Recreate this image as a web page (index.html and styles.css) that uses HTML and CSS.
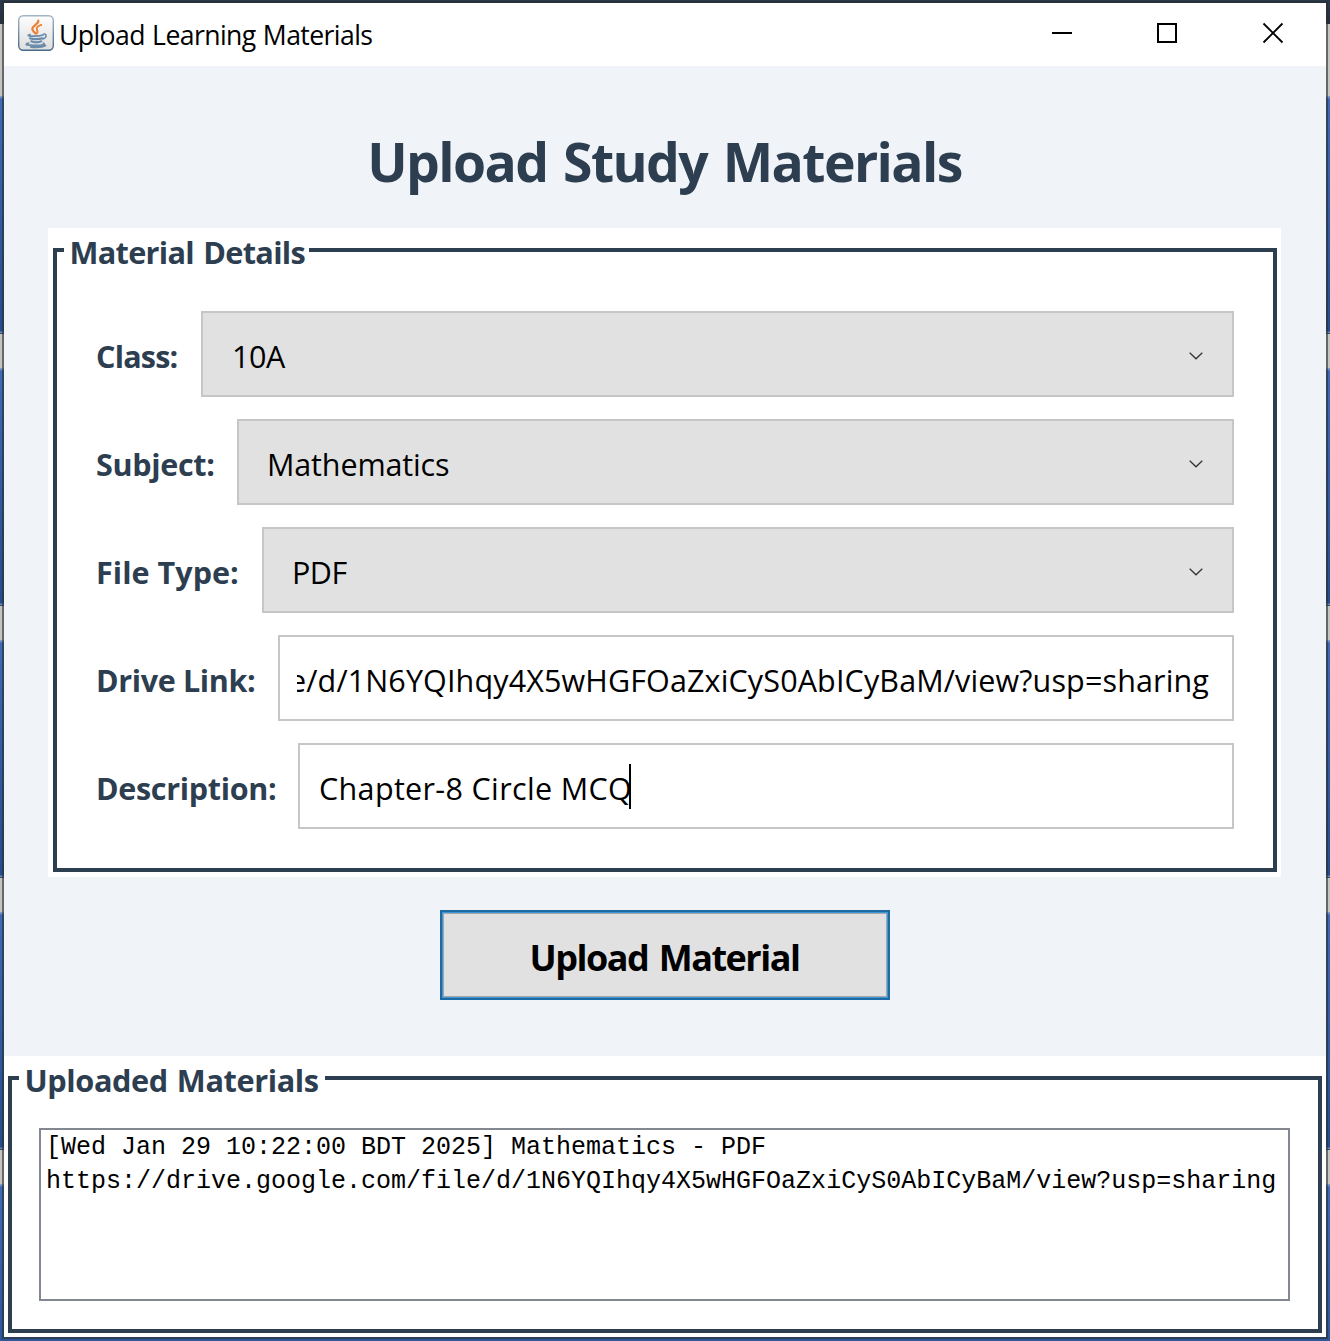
FILE: index.html
```html
<!DOCTYPE html>
<html lang="en">
<head>
<meta charset="utf-8">
<title>Upload Learning Materials</title>
<link rel="stylesheet" href="styles.css">
</head>
<body>
<div class="window">
  <header class="titlebar">
    <svg class="app-icon" width="36" height="36" viewBox="0 0 36 36">
      <defs>
        <linearGradient id="face" x1="0" y1="0" x2="0" y2="1"><stop offset="0" stop-color="#fdfdfd"/><stop offset="1" stop-color="#dedede"/></linearGradient>
        <linearGradient id="edge" x1="0" y1="0" x2="0" y2="1"><stop offset="0" stop-color="#a3b6c8"/><stop offset="1" stop-color="#456a8a"/></linearGradient>
      </defs>
      <rect x=".7" y=".7" width="34.6" height="34.6" rx="4.5" fill="url(#face)" stroke="url(#edge)" stroke-width="1.4"/>
      <g fill="none" stroke="#ec8036" stroke-linecap="round">
        <path stroke-width="2.200" d="M20.300 5.500c1 3.500-6.300 5-6 8.600.1 1.800 2 3 3.200 4.400"/>
        <path stroke-width="1.900" d="M23.300 9.800c-3.300 1-5.300 2.900-4.400 4.700.9 1.700 1.300 2.500-.2 4"/>
      </g>
      <g fill="none" stroke="#6b8caa" stroke-linecap="round">
        <path stroke-width="1.800" d="M12 19.500c-3.500.9-1.500 1.700 4 1.700 4 0 7-.4 9-1.200"/>
        <path stroke-width="2.200" d="M12 23.300c2.500 1.200 9.500 1.200 12.500 0M13.300 26.300c2.500 1.300 7.500 1.300 10 0"/>
        <path stroke-width="1.600" d="M25.500 19.200c3.500-.9 3.500 3.500-.5 4.700"/>
        <path stroke-width="1.800" d="M10.500 28.200c-6 1.500 1 2.400 7.500 2.200 6 0 10-.9 7.500-2.200M13 32c6 .5 12 .1 14.500-1.500"/>
      </g>
    </svg>
    <span class="caption">Upload Learning Materials</span>
    <svg class="controls" width="232" height="22" viewBox="0 0 232 22" fill="none" stroke="#000">
      <path stroke-width="2" d="M0 11h20"/>
      <rect x="106" y="2" width="18" height="18" stroke-width="2"/>
      <path stroke-width="1.800" d="M211.500 1.500l19 19M230.500 1.500l-19 19"/>
    </svg>
  </header>

  <main class="content">
    <h1>Upload Study Materials</h1>
    <section class="panel details">
      <div class="frame">
        <h2 class="legend">Material Details</h2>
        <div class="rows">
          <div class="row">
            <label class="label label-class">Class:</label>
            <div class="field combo"><span class="value value-class">10A</span><svg class="chevron" width="14" height="8" viewBox="0 0 14 8"><path d="M.7.700 7 6.800 13.300.700"/></svg></div>
          </div>
          <div class="row">
            <label class="label label-subject">Subject:</label>
            <div class="field combo"><span class="value value-subject">Mathematics</span><svg class="chevron" width="14" height="8" viewBox="0 0 14 8"><path d="M.7.700 7 6.800 13.300.700"/></svg></div>
          </div>
          <div class="row">
            <label class="label label-type">File Type:</label>
            <div class="field combo"><span class="value value-type">PDF</span><svg class="chevron" width="14" height="8" viewBox="0 0 14 8"><path d="M.7.700 7 6.800 13.300.700"/></svg></div>
          </div>
          <div class="row">
            <label class="label label-link">Drive Link:</label>
            <div class="field link"><div class="scroll"><span class="value value-link">e/d/1N6YQIhqy4X5wHGFOaZxiCyS0AbICyBaM/view?usp=sharing</span></div></div>
          </div>
          <div class="row">
            <label class="label label-description">Description:</label>
            <div class="field description"><span class="value value-description">Chapter-8 Circle MCQ</span><i class="caret"></i></div>
          </div>
        </div>
      </div>
    </section>
    <button class="upload" type="button">Upload Material</button>
  </main>

  <section class="panel uploaded">
    <div class="frame">
      <h2 class="legend">Uploaded Materials</h2>
      <pre class="log">[Wed Jan 29 10:22:00 BDT 2025] Mathematics - PDF
https://drive.google.com/file/d/1N6YQIhqy4X5wHGFOaZxiCyS0AbICyBaM/view?usp=sharing</pre>
    </div>
  </section>
</div>
</body>
</html>
```
FILE: styles.css
```css
* { box-sizing: border-box; }

html { height: 100%; overflow: hidden; }

body {
  margin: 0;
  height: 1341px;
  padding: 3px 4px 4px;
  overflow: hidden;
  font-family: "Open Sans", "Noto Sans", sans-serif;
  background:
    linear-gradient(#283a4e, #22303f) 0 0 / 100% 24px no-repeat,
    repeating-linear-gradient(#c6c4c1 0 33px, #7f9cc4 33px 34px, #3d6bb5 36px, #244d8c 268px, #6f87aa 269px 270px, #2a4d80 270px 271px, #c6c4c1 271px 272px) 0 63px / 100% 1278px no-repeat,
    #c6c4c1;
}

.window {
  display: flex;
  flex-direction: column;
  height: 1334px;
  background: #fff;
  box-shadow: 0 0 0 2px rgba(45, 45, 45, .62);
}

.titlebar {
  display: flex;
  align-items: flex-start;
  height: 63px;
  padding: 12px 42px 0 14px;
}

.app-icon { flex: none; }

.caption {
  margin: -12px 0 0 5px;
  flex: 1;
  font-size: 26.6px;
  font-weight: 370;
  line-height: 64px;
  letter-spacing: -.6px;
  word-spacing: 1px;
  color: #000;
}

.controls { flex: none; margin-top: 7px; }

.content {
  display: flex;
  flex-direction: column;
  align-items: center;
  height: 990px;
  padding: 61px 45px 0 44px;
  background: #f0f4f8;
}

h1 {
  margin: 0 0 31px;
  font-size: 53.5px;
  font-weight: 670;
  line-height: 70px;
  letter-spacing: -1.6px;
  word-spacing: 3.2px;
  color: #2c3e50;
}

.panel { background: #fff; }

.frame { border: 4px solid #2c3e50; }

.legend {
  margin: -20px 0 0 7px;
  padding-left: 5.5px;
  font-size: 30.7px;
  font-weight: 700;
  line-height: 40px;
  white-space: nowrap;
  color: #2c3e50;
  background: #fff;
}

.details {
  align-self: stretch;
  height: 649px;
  padding: 20px 4px 5px 5px;
}

.details .frame { height: 624px; }

.details .legend { width: 245px; letter-spacing: -.7px; word-spacing: 2px; }

.rows {
  display: flex;
  flex-direction: column;
  gap: 22px;
  padding: 39px 39px 0;
}

.row { display: flex; height: 86px; }

.label {
  flex: none;
  padding-top: 4px;
  font-size: 30.5px;
  font-weight: 700;
  line-height: 82px;
  white-space: nowrap;
  color: #2c3e50;
}

.label-class { width: 105px; letter-spacing: -.8px; }
.label-subject { width: 141px; letter-spacing: -.3px; }
.label-type { width: 166px; letter-spacing: .05px; }
.label-link { width: 182px; letter-spacing: -.35px; }
.label-description { width: 202px; letter-spacing: -.3px; }

.field {
  display: flex;
  flex: 1;
  min-width: 0;
  border: 2px solid #c6c6c6;
  background: #fff;
}

.value {
  padding-top: 4px;
  font-size: 30.5px;
  line-height: 78px;
  white-space: nowrap;
  color: #000;
}

.combo {
  justify-content: space-between;
  padding: 0 29px 0 28px;
  background: #e1e1e1;
}

.value-class { margin-left: 1px; letter-spacing: -.44px; }
.value-subject { letter-spacing: -.14px; }
.value-type { letter-spacing: -.5px; }
.value-link { letter-spacing: .13px; }
.value-description { letter-spacing: .34px; }

.chevron {
  flex: none;
  margin-top: 38.500px;
  fill: none;
  stroke: #333;
  stroke-width: 1.3;
}

.link { padding: 0 23px 0 17px; }

.scroll {
  display: flex;
  flex: 1;
  min-width: 0;
  justify-content: flex-end;
  overflow: hidden;
}

.description { padding-left: 19px; }

.caret {
  width: 2px;
  height: 45px;
  margin: 19px 0 0 -3px;
  background: #000;
}

.upload {
  width: 450px;
  height: 90px;
  margin-top: 33px;
  padding: 5px 0 0;
  border: 2px solid #1c6ca3;
  background: #e1e1e1;
  box-shadow: inset 0 0 0 1px #3b97d8, inset 0 0 0 2px #a6a6a6;
  font: 670 36px "Open Sans", "Noto Sans", sans-serif;
  letter-spacing: -1.5px;
  word-spacing: 2.5px;
  color: #000;
}

.uploaded {
  height: 281px;
  padding: 20px 4px 4px;
}

.uploaded .frame { height: 257px; }

.uploaded .legend { width: 306px; letter-spacing: -.4px; word-spacing: 1.5px; }

.log {
  height: 173px;
  margin: 28px 28px 0 27px;
  padding: 1px 0 0 5px;
  overflow: hidden;
  border: 2px solid #828790;
  background: #fff;
  font: 25px/34px "Liberation Mono", monospace;
  color: #000;
}
```
